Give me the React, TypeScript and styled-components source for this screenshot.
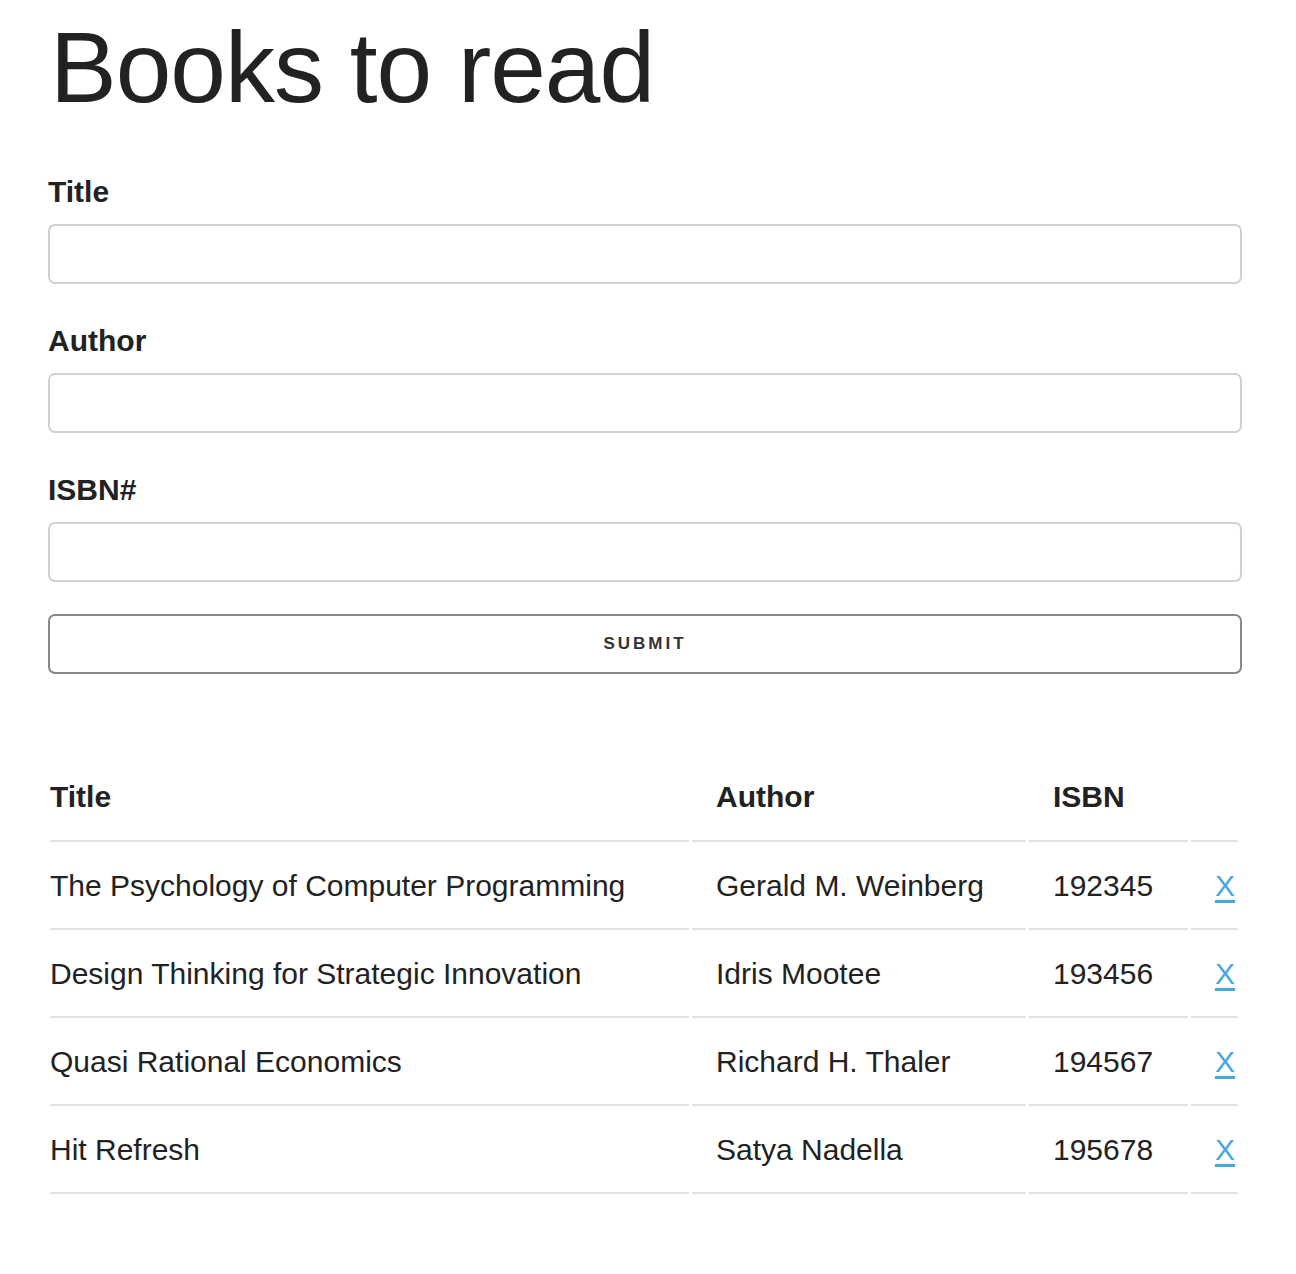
import React from "react";
import styled, { createGlobalStyle } from "styled-components";

const GlobalStyle = createGlobalStyle`
  html, body {
    margin: 0;
    padding: 0;
    background: #fff;
  }
  body {
    font-family: "Liberation Sans", Arial, Helvetica, sans-serif;
    color: #222;
  }
  * {
    box-sizing: border-box;
  }
`;

const books = [
  { title: "The Psychology of Computer Programming", author: "Gerald M. Weinberg", isbn: "192345" },
  { title: "Design Thinking for Strategic Innovation", author: "Idris Mootee", isbn: "193456" },
  { title: "Quasi Rational Economics", author: "Richard H. Thaler", isbn: "194567" },
  { title: "Hit Refresh", author: "Satya Nadella", isbn: "195678" },
];

const App = () => {
  return (
    <Page>
      <GlobalStyle />
      <Heading>Books to read</Heading>
      <Form onSubmit={(e) => e.preventDefault()}>
        <Field>
          <Label htmlFor="title">Title</Label>
          <Input id="title" type="text" />
        </Field>
        <Field>
          <Label htmlFor="author">Author</Label>
          <Input id="author" type="text" />
        </Field>
        <Field>
          <Label htmlFor="isbn">ISBN#</Label>
          <Input id="isbn" type="text" />
        </Field>
        <SubmitButton type="submit">Submit</SubmitButton>
      </Form>
      <BookTable>
        <colgroup>
          <col style={{ width: 639 }} />
          <col style={{ width: 334 }} />
          <col style={{ width: 159 }} />
          <col />
        </colgroup>
        <thead>
          <tr>
            <Th>Title</Th>
            <Th>Author</Th>
            <Th>ISBN</Th>
            <Th />
          </tr>
        </thead>
        <tbody>
          {books.map((b) => (
            <tr key={b.isbn}>
              <Td>{b.title}</Td>
              <Td>{b.author}</Td>
              <Td>{b.isbn}</Td>
              <Td>
                <DeleteLink href="#">X</DeleteLink>
              </Td>
            </tr>
          ))}
        </tbody>
      </BookTable>
    </Page>
  );
};

export default App;

const Page = styled.div`
  width: 1290px;
  padding: 0 48px 60px;
`;

const Heading = styled.h1`
  margin: 7px 0 47px;
  padding-left: 2px;
  font-size: 100px;
  line-height: 120px;
  font-weight: 400;
  letter-spacing: -1px;
  color: #222;
`;

const Form = styled.form`
  display: flex;
  flex-direction: column;
`;

const Field = styled.div`
  display: flex;
  flex-direction: column;
  margin-bottom: 39px;

  &:last-of-type {
    margin-bottom: 32px;
  }
`;

const Label = styled.label`
  font-size: 30px;
  line-height: 36px;
  font-weight: 700;
  margin-bottom: 14px;
`;

const Input = styled.input`
  height: 60px;
  width: 100%;
  border: 2px solid #d1d1d1;
  border-radius: 7px;
  background: #fff;
  padding: 0 18px;
  font-size: 28px;
  font-family: inherit;
  outline: none;
`;

const SubmitButton = styled.button`
  height: 60px;
  width: 100%;
  border: 2px solid #888;
  border-radius: 7px;
  background: transparent;
  color: #333;
  font-family: inherit;
  font-size: 17px;
  font-weight: 700;
  letter-spacing: 3px;
  text-transform: uppercase;
  cursor: pointer;
`;

const BookTable = styled.table`
  margin-top: 80px;
  width: 1194px;
  table-layout: fixed;
  border-collapse: separate;
  border-spacing: 3px 0;
  margin-left: -1px;
`;

const Th = styled.th`
  text-align: left;
  font-size: 30px;
  line-height: 38px;
  font-weight: 700;
  padding: 24px 0 24px 24px;
  border-bottom: 2px solid #e1e1e1;

  &:first-child {
    padding-left: 0;
  }
`;

const Td = styled.td`
  font-size: 30px;
  line-height: 38px;
  padding: 25px 0 23px 24px;
  border-bottom: 2px solid #e1e1e1;
  white-space: nowrap;

  &:first-child {
    padding-left: 0;
  }
`;

const DeleteLink = styled.a`
  color: #4aa8d8;
  text-decoration: underline;
  text-underline-offset: 4px;
`;
